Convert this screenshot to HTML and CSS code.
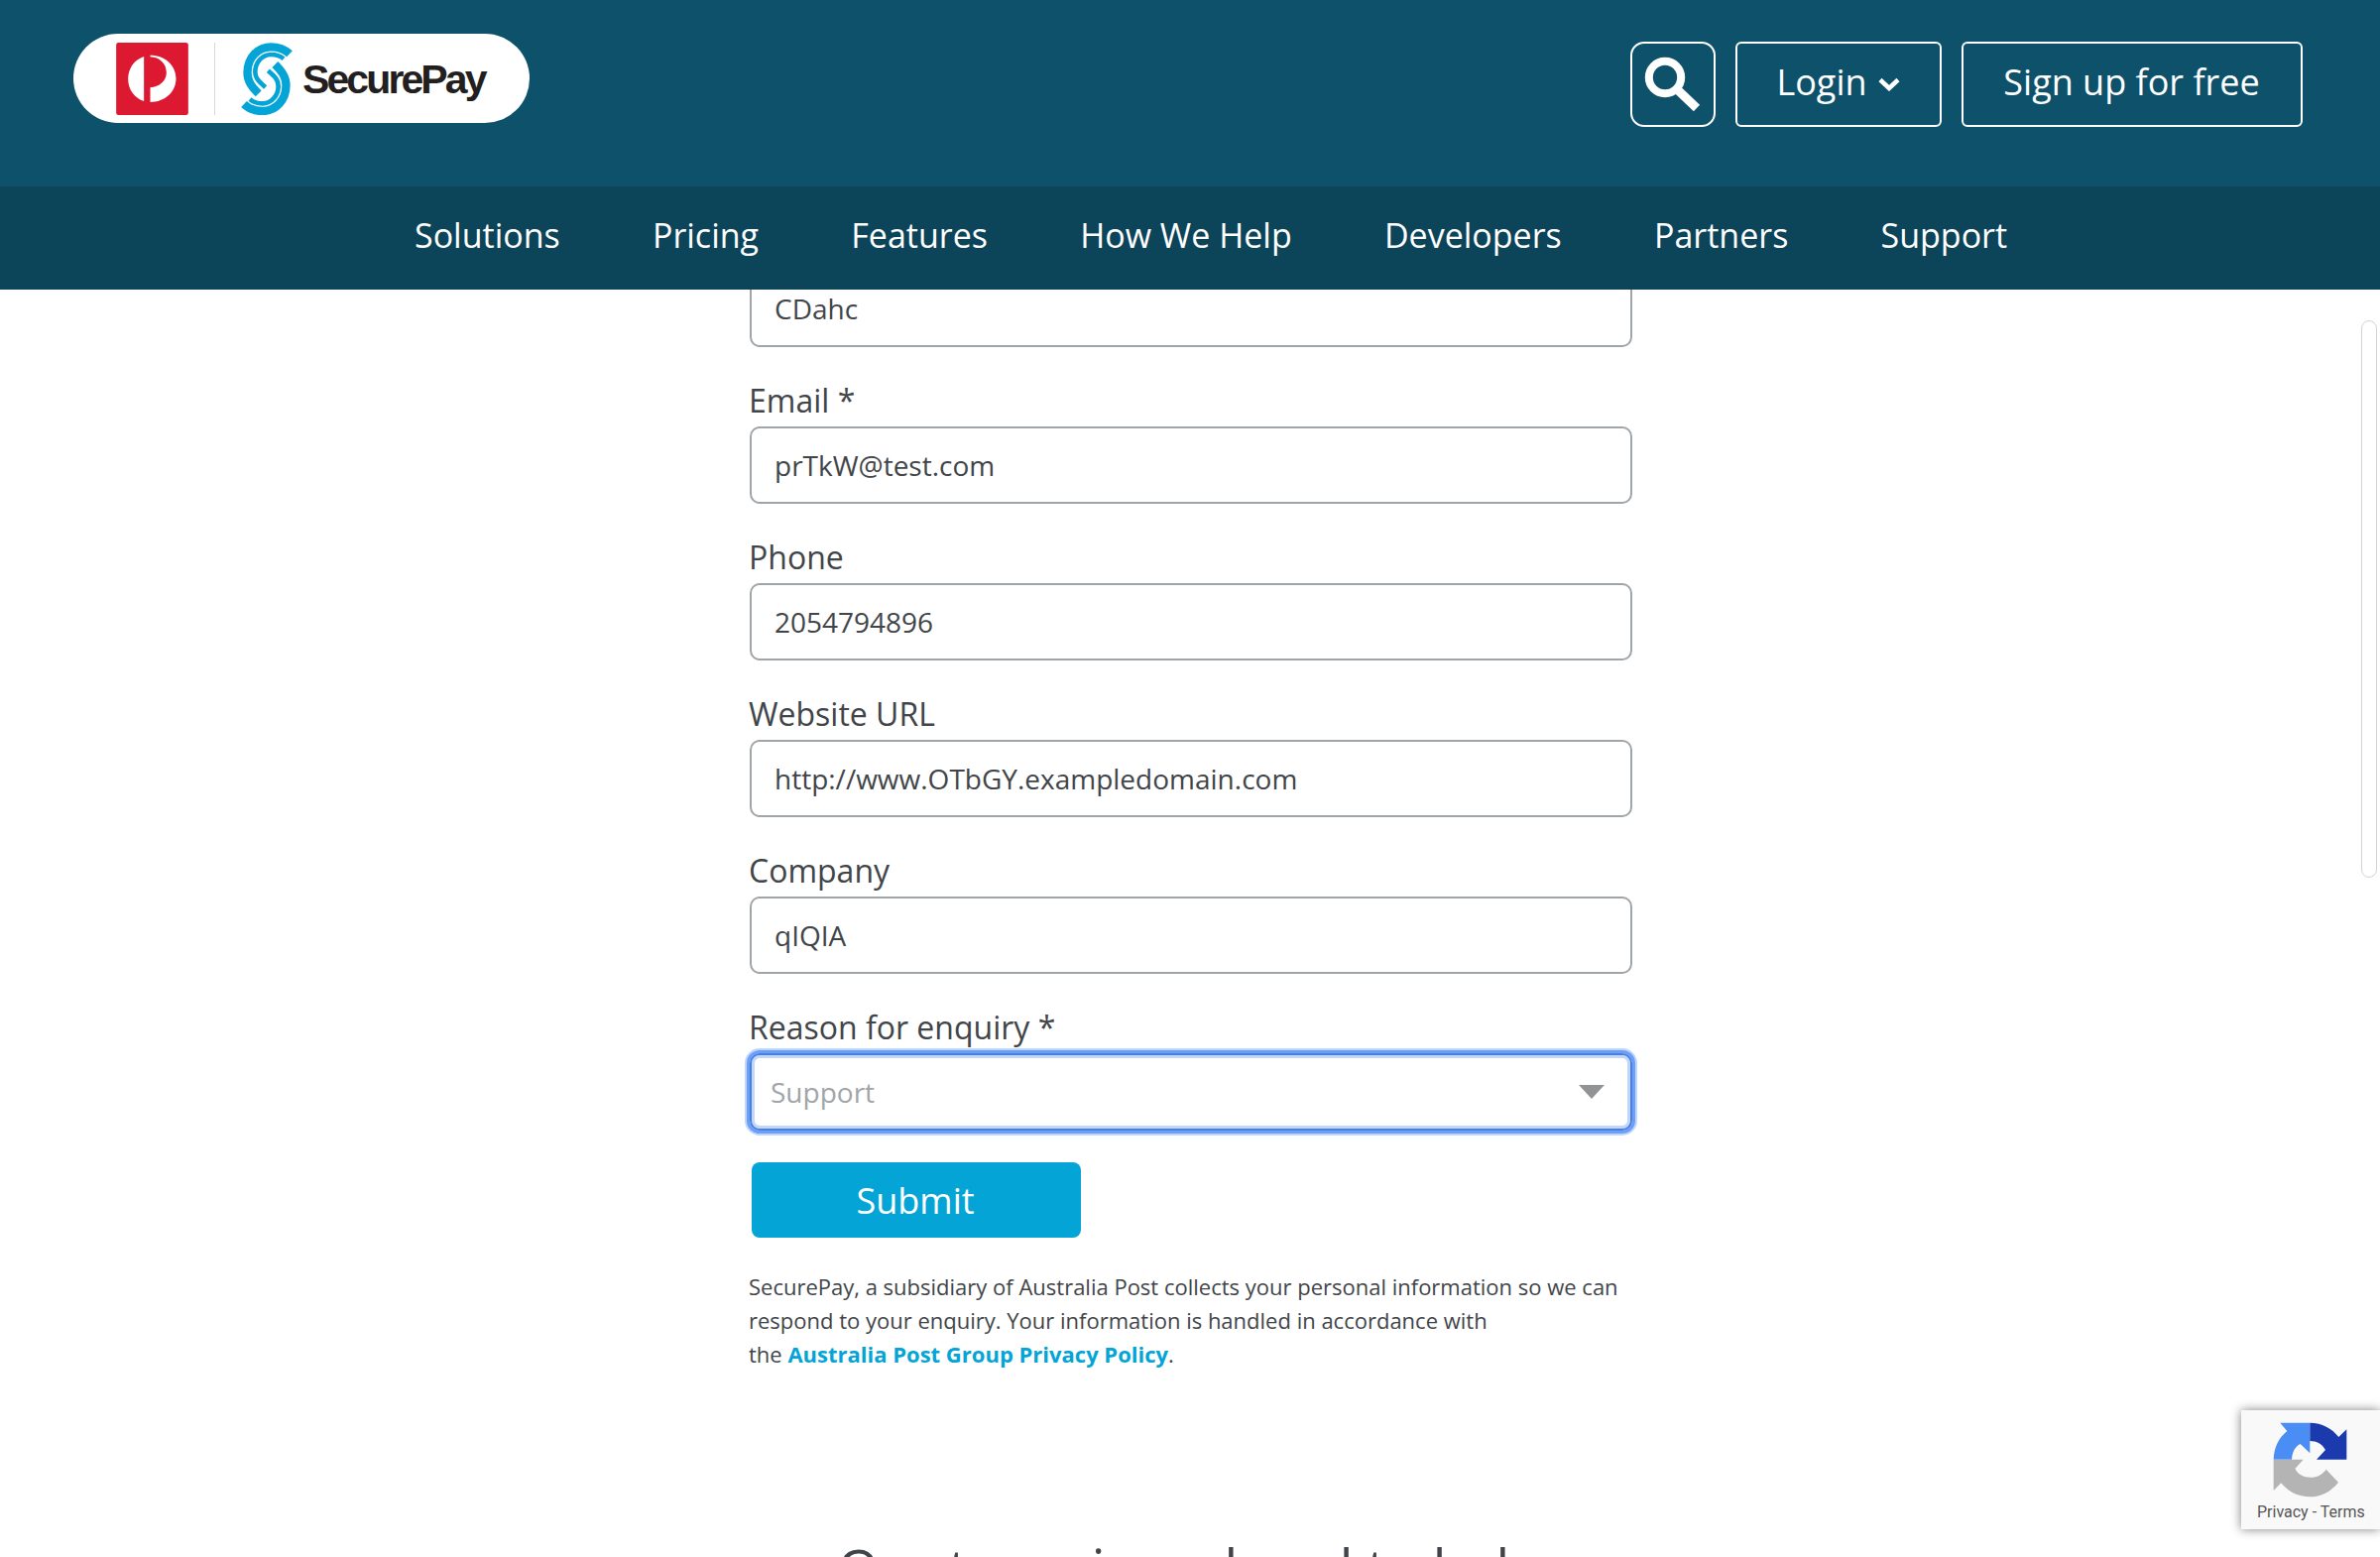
FILE: index.html
```html
<!DOCTYPE html>
<html lang="en">
<head>
<meta charset="utf-8">
<title>Contact us | SecurePay</title>
<link rel="stylesheet" href="styles.css">
</head>
<body>
<header class="header">
  <div class="topbar">
    <a class="brand" aria-label="SecurePay">
      <svg class="brand-post" viewBox="172 69 218 219">
        <rect x="172" y="69" width="218" height="219" rx="7" fill="#dc1931"/>
        <path fill="#fff" d="M256 111V246C228 237 208 211 208 179C208 146 228 120 256 111ZM275 107C320 107 353 138 353 178C353 218 320 249 275 249V205C303 203 324 185 324 160C324 132 303 113 275 112Z"/>
      </svg>
      <span class="brand-divider"></span>
      <svg class="brand-s" viewBox="549 69 156 219" fill="none" stroke="#04a5d6">
        <g id="curve">
          <path stroke-width="25" d="M696 103C680 88 662 82 640 82C600 82 568.500 115 568.500 160C568.500 186 582 203 602 223"/>
          <path stroke-width="14" d="M678 118C668 109 655 105 640 105C612 105 592 130 592 158C592 178 604 187 623 204"/>
        </g>
        <use href="#curve" transform="rotate(180 627 179)"/>
      </svg>
      <span class="brand-name">SecurePay</span>
    </a>
    <div class="actions">
      <button class="search" aria-label="Search">
        <svg width="86" height="86" viewBox="0 0 86 86" fill="none" stroke="#fff">
          <circle cx="35" cy="36" r="16.200" stroke-width="8"/>
          <path d="M47 48L67 67" stroke-width="9"/>
        </svg>
      </button>
      <button class="btn login">Login
        <svg width="22" height="14" viewBox="0 0 22 14" fill="none" stroke="#fff" stroke-width="4.500"><path d="M2 2.500L11 11L20 2.500"/></svg>
      </button>
      <button class="btn signup">Sign up for free</button>
    </div>
  </div>
  <nav class="nav">
    <a>Solutions</a><a>Pricing</a><a>Features</a><a>How We Help</a><a>Developers</a><a>Partners</a><a>Support</a>
  </nav>
</header>
<main class="main">
  <form class="form">
    <div class="field"><div class="input">CDahc</div></div>
    <div class="field"><label>Email *</label><div class="input">prTkW@test.com</div></div>
    <div class="field"><label>Phone</label><div class="input">2054794896</div></div>
    <div class="field"><label>Website URL</label><div class="input">http://www.OTbGY.exampledomain.com</div></div>
    <div class="field"><label>Company</label><div class="input">qIQIA</div></div>
    <div class="field"><label>Reason for enquiry *</label>
      <div class="input select">Support
        <svg width="26" height="14" viewBox="0 0 26 14"><path d="M0 0H26L13 14Z" fill="#919395"/></svg>
      </div>
    </div>
    <button class="submit" type="button">Submit</button>
    <p class="note">SecurePay, a subsidiary of Australia Post collects your personal information so we can<br>respond to your enquiry. Your information is handled in accordance with<br>the <a>Australia Post Group Privacy Policy</a>.</p>
  </form>
  <h2 class="heading">Our team is on hand to help</h2>
</main>
<div class="scroll-thumb"></div>
<aside class="recaptcha">
  <svg width="76" height="76" viewBox="158 103 228 228">
    <path fill="#4a8ef5" d="M180 105H270V197L241 169C226 176 216 193 215 216H160C161 180 176 150 201 130Z"/>
    <path fill="#1b3aad" d="M270 105C307 106 336 121 357 148L381 125V216H290L317 187C307 169 291 160 270 160Z"/>
    <path fill="#b4b4b4" d="M160 216H250L225 244C235 262 250 270 272 270C292 270 307 262 319 246L356 285C333 314 303 329 270 329C235 329 205 314 183 287L160 310Z"/>
  </svg>
  <span>Privacy - Terms</span>
</aside>
</body>
</html>
```

FILE: styles.css
```css
* { box-sizing: border-box; }
body {
  margin: 0;
  height: 1570px;
  overflow: hidden;
  background: #fff;
  color: #414549;
  font-family: "Open Sans", sans-serif;
}
button { font-family: inherit; color: #fff; padding: 0; }

.topbar {
  height: 188px;
  background: #0e516b;
  display: flex;
  justify-content: space-between;
  align-items: flex-start;
  padding: 34px 78px 0 74px;
}
.brand {
  width: 460px;
  height: 90px;
  border-radius: 45px;
  background: #fff;
  display: flex;
  align-items: center;
  padding: 1px 0 0 43px;
}
.brand-post { width: 73px; height: 73px; }
.brand-divider { width: 1px; height: 73px; margin: 0 26px; background: #d5d7d9; }
.brand-s { width: 52px; height: 73px; }
.brand-name {
  margin-left: 10px;
  font: bold 41px/60px "Liberation Sans", Arial, sans-serif;
  letter-spacing: -2.9px;
  color: #231f20;
}
.actions { display: flex; gap: 20px; margin-top: 8px; }
.search, .btn { height: 86px; background: transparent; border: 2px solid #fff; }
.search { width: 86px; border-radius: 14px; display: flex; }
.search svg { margin: -2px; flex: none; }
.btn {
  border-radius: 6px;
  display: flex;
  align-items: center;
  justify-content: center;
  font-size: 36px;
  padding-bottom: 5px;
}
.login { width: 208px; gap: 11px; padding-right: 1px; }
.login svg { margin-top: 5px; }
.signup { width: 344px; padding-right: 1px; }

.nav {
  height: 104px;
  background: #0c4459;
  display: flex;
  gap: 93.2px;
  padding-left: 418px;
  color: #fff;
  font-size: 34px;
  line-height: 98px;
  white-space: nowrap;
}

.main { height: 1278px; overflow: hidden; }
.form { width: 892px; margin: -20px 0 0 755px; }
.field { margin-bottom: 32px; }
.field label { display: block; font-size: 32px; line-height: 44px; margin-bottom: 4px; }
.input {
  width: 890px;
  height: 78px;
  margin-left: 1px;
  border: 2px solid #a0a5a9;
  border-radius: 10px;
  padding-left: 23px;
  font-size: 28px;
  line-height: 74px;
}
.select {
  display: flex;
  align-items: center;
  justify-content: space-between;
  padding: 0 26px 0 19px;
  color: #a0a5a9;
  border-color: #4a80dc;
  box-shadow: 0 0 0 3px #6b9ffa, 0 0 0 5px #c0d6fd, inset 0 0 0 3px #c0d6fd;
}
.submit {
  display: block;
  width: 332px;
  height: 76px;
  margin-left: 3px;
  border: 0;
  border-radius: 8px;
  padding-right: 2px;
  background: #04a5d6;
  font-size: 36px;
}
.note { margin: 32px 0 0; font-size: 22px; line-height: 34px; white-space: nowrap; }
.note a { color: #04a5d6; font-weight: 700; }
.heading { margin: 161px 0 0; font-size: 54.3px; font-weight: 400; line-height: 76px; text-align: center; }

.scroll-thumb {
  position: absolute;
  left: 2381px;
  top: 323px;
  width: 16px;
  height: 562px;
  border: 1px solid #d4d4d4;
  border-radius: 8px;
  background: #fff;
}
.recaptcha {
  position: absolute;
  right: 0;
  top: 1422px;
  width: 140px;
  height: 120px;
  background: #f9f9f9;
  box-shadow: 0 0 10px #808080;
  display: flex;
  flex-direction: column;
  padding: 12px 0 0 32px;
}
.recaptcha span {
  margin: 5px 0 0 -16px;
  font: 16px/20px Roboto, sans-serif;
  color: #555;
  white-space: nowrap;
}
```
